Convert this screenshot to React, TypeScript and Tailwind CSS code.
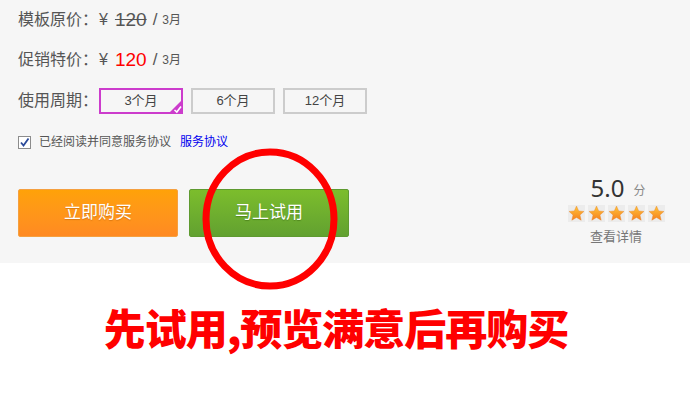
import React from "react";

const font = { fontFamily: '"Liberation Sans", "Noto Sans CJK SC", sans-serif' };

function Star() {
  return (
    <div className="w-[17px] h-[17px] bg-[#ececec] flex items-center justify-center">
      <svg width="17" height="17" viewBox="0 0 24 24">
        <defs>
          <linearGradient id="sg" x1="0" y1="0" x2="0" y2="1">
            <stop offset="0" stopColor="#ffc43a" />
            <stop offset="1" stopColor="#f5801e" />
          </linearGradient>
        </defs>
        <path
          d="M12 1.5l3.1 6.9 7.4.7-5.6 5 1.7 7.4L12 17.6l-6.6 3.9 1.7-7.4-5.6-5 7.4-.7z"
          fill="url(#sg)"
          stroke="#e8862a"
          strokeWidth="0.6"
          strokeLinejoin="round"
        />
      </svg>
    </div>
  );
}

function Period({ label, active }: { label: string; active?: boolean }) {
  return (
    <div
      className={
        "relative w-[84px] h-[26px] border-2 flex items-center justify-center text-[13px] text-[#444] bg-[#f6f6f6] " +
        (active ? "border-[#cc3ccc]" : "border-[#cccccc]")
      }
    >
      {label}
      {active && (
        <svg className="absolute right-[-2px] bottom-[-2px]" width="15" height="15" viewBox="0 0 15 15">
          <path d="M15 0 L15 15 L0 15 Z" fill="#cc3ccc" />
          <path d="M6.5 11 L8.8 13 L13 7.5" stroke="#fff" strokeWidth="1.6" fill="none" />
        </svg>
      )}
    </div>
  );
}

export default function App() {
  return (
    <div className="relative w-[690px] h-[400px] bg-white overflow-hidden" style={font}>
      <div className="h-[263px] bg-[#f6f6f6] pl-[18px] pt-[8px] flex flex-col">
        <div className="h-[24px] flex items-center text-[16px] text-[#555]">
          <span>模板原价：</span>
          <span className="ml-[1px]">¥</span>
          <span className="ml-[7px] text-[19px] text-[#555] line-through">120</span>
          <span className="ml-[6px] text-[17px]">/</span>
          <span className="ml-[5px] text-[12px]">3月</span>
        </div>
        <div className="h-[24px] mt-[16px] flex items-center text-[16px] text-[#555]">
          <span>促销特价：</span>
          <span className="ml-[1px]">¥</span>
          <span className="ml-[7px] text-[19px] text-[#ff0000]">120</span>
          <span className="ml-[6px] text-[17px]">/</span>
          <span className="ml-[5px] text-[12px]">3月</span>
        </div>
        <div className="h-[26px] mt-[16px] flex items-center text-[16px] text-[#555]">
          <span className="w-[81px]">使用周期：</span>
          <div className="flex gap-[8px]">
            <Period label="3个月" active />
            <Period label="6个月" />
            <Period label="12个月" />
          </div>
        </div>
        <div className="h-[16px] mt-[20px] flex items-center text-[12px] text-[#555]">
          <div className="w-[13px] h-[13px] border border-[#8c8c8c] bg-white flex items-center justify-center">
            <svg width="11" height="11" viewBox="0 0 11 11">
              <path d="M2 5.5 L4.5 8.5 L9.5 1.5" stroke="#2a4a9a" strokeWidth="1.8" fill="none" />
            </svg>
          </div>
          <span className="ml-[8px]">已经阅读并同意服务协议</span>
          <span className="ml-[9px] text-[#0000ee]">服务协议</span>
        </div>
        <div className="mt-[25px] flex">
          <div className="mt-[14px] flex gap-[11px]">
            <div className="w-[160px] h-[48px] rounded-[2px] border border-[#f5a040] bg-gradient-to-b from-[#ffa208] to-[#ff8a22] flex items-center justify-center text-white text-[17px] [text-shadow:0_1px_1px_rgba(160,80,0,0.4)]">
              立即购买
            </div>
            <div className="w-[160px] h-[48px] rounded-[2px] border border-[#5e9a30] bg-gradient-to-b from-[#7cbd2c] to-[#62a130] flex items-center justify-center text-white text-[17px] [text-shadow:0_1px_1px_rgba(40,80,0,0.4)]">
              马上试用
            </div>
          </div>
          <div className="ml-auto mr-[26px] w-[96px] flex flex-col items-center">
            <div className="h-[26px] flex items-end text-[#333]">
              <span className="text-[24px] leading-[26px] ml-[4px]" style={{ fontFamily: '"Noto Sans", "Liberation Sans", sans-serif' }}>5.0</span>
              <span className="ml-[9px] text-[12px] text-[#888] leading-[20px]">分</span>
            </div>
            <div className="mt-[4px] flex gap-[3px]">
              <Star />
              <Star />
              <Star />
              <Star />
              <Star />
            </div>
            <div className="mt-[5px] text-[13px] text-[#777]">查看详情</div>
          </div>
        </div>
      </div>
      <div className="flex justify-center pr-[18px] mt-[41px]">
        <span
          className="text-[42px] leading-[46px] font-black text-[#ff0000] tracking-[-1px]"
          style={{ fontFamily: '"Noto Sans CJK SC", sans-serif' }}
        >
          先试用,预览满意后再购买
        </span>
      </div>
      <svg className="absolute left-[202px] top-[148px]" width="136" height="142" viewBox="0 0 136 142">
        <ellipse cx="68" cy="71" rx="64" ry="67" fill="none" stroke="#ff0000" strokeWidth="7" />
      </svg>
    </div>
  );
}
